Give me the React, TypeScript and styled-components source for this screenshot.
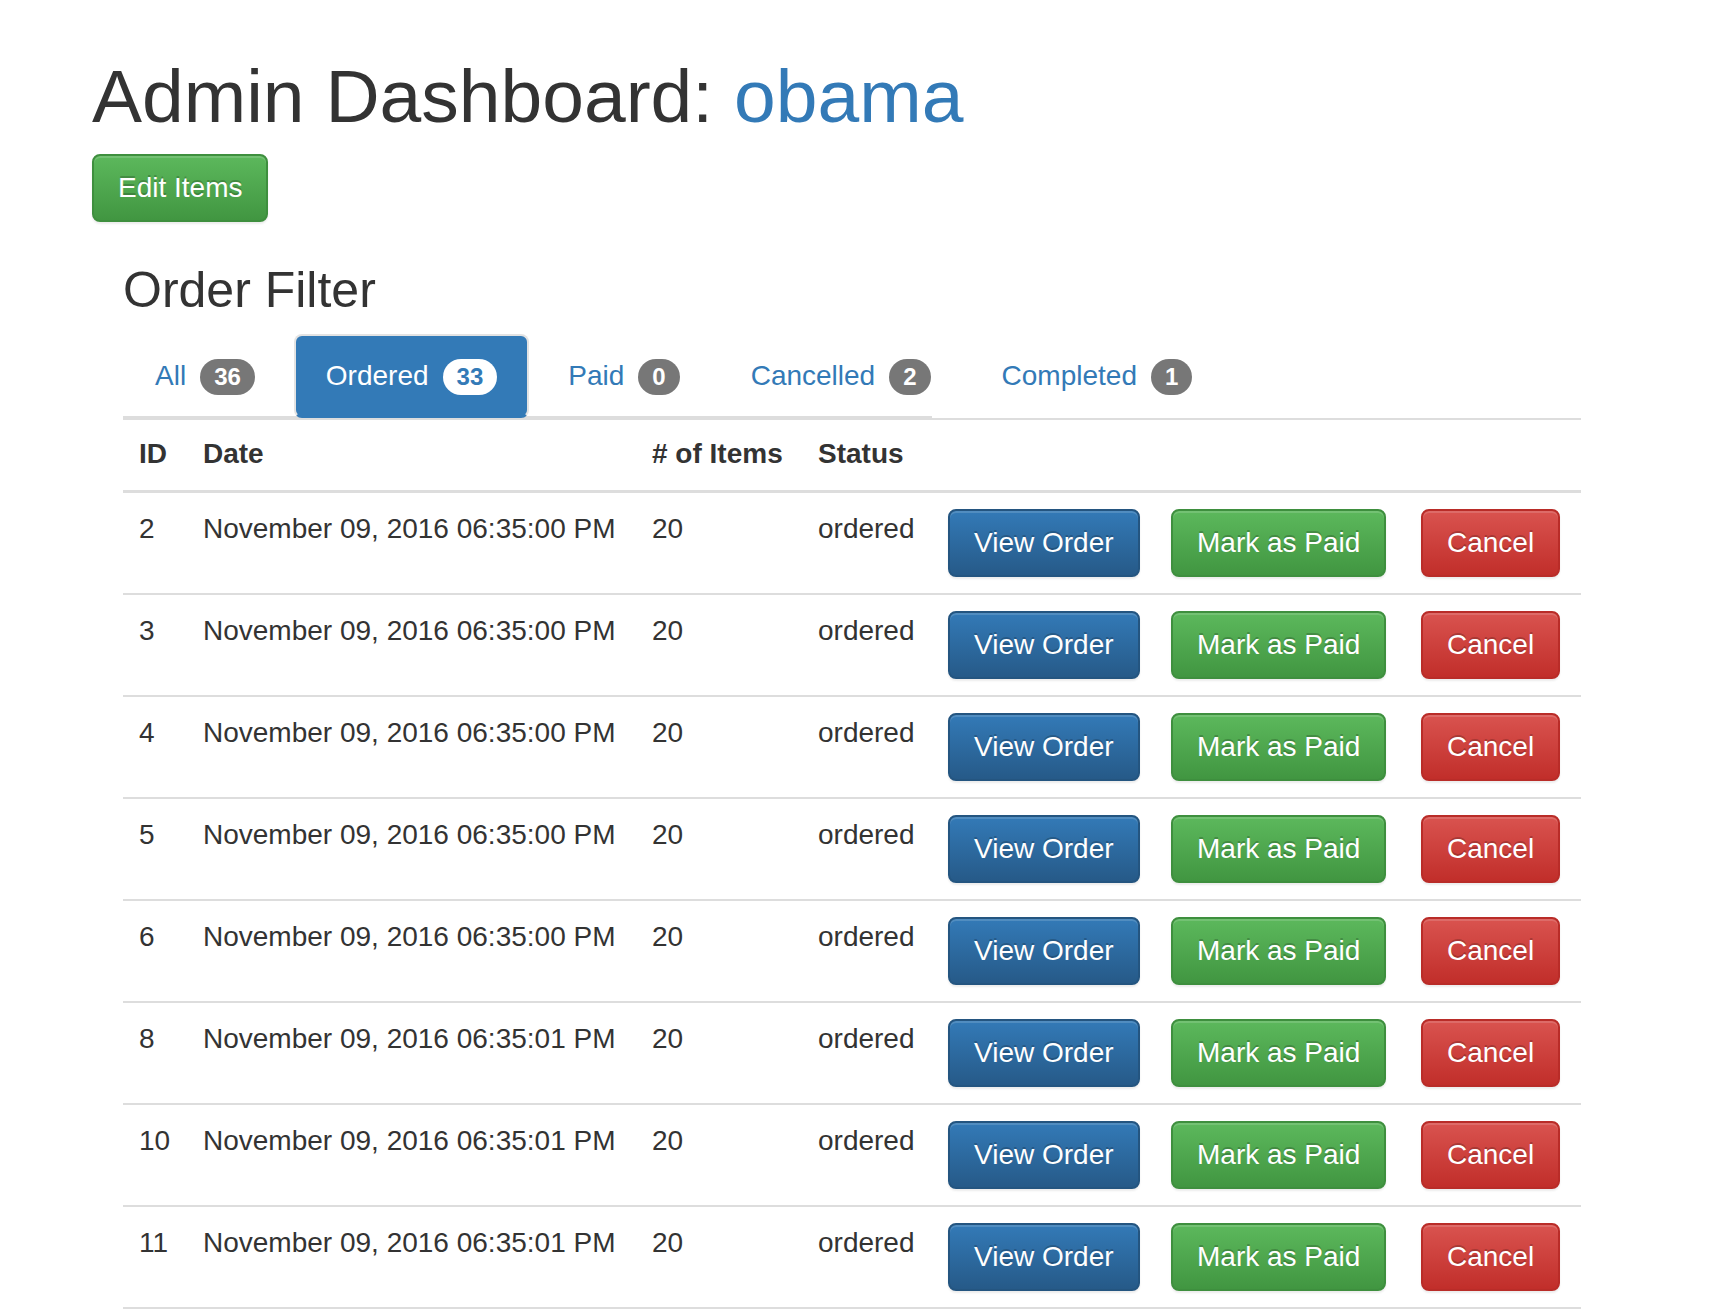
import React from "react";
import styled, { createGlobalStyle, css } from "styled-components";

const GlobalStyle = createGlobalStyle`
  html, body { margin: 0; padding: 0; background: #fff; }
  body {
    font-family: "Liberation Sans", Arial, Helvetica, sans-serif;
    font-size: 28px;
    line-height: 40px;
    color: #333;
  }
  * { box-sizing: border-box; }
`;

const Page = styled.div`
  padding: 16px 0 0 92px;
`;

const Title = styled.h1`
  font-size: 75px;
  font-weight: 400;
  line-height: 1.1;
  margin: 39px 0 16px;
  color: #333;
`;

const UserLink = styled.a`
  color: #337ab7;
  text-decoration: none;
`;

type Variant = "primary" | "success" | "danger";

const variants: Record<Variant, ReturnType<typeof css>> = {
  primary: css`
    background-image: linear-gradient(to bottom, #337ab7 0, #265a88 100%);
    border-color: #245580;
  `,
  success: css`
    background-image: linear-gradient(to bottom, #5cb85c 0, #419641 100%);
    border-color: #3e8f3e;
  `,
  danger: css`
    background-image: linear-gradient(to bottom, #d9534f 0, #c12e2a 100%);
    border-color: #b92c28;
  `,
};

const Button = styled.button<{ $variant: Variant }>`
  display: inline-block;
  font-family: inherit;
  font-size: 28px;
  line-height: 40px;
  padding: 12px 24px;
  border: 2px solid transparent;
  border-radius: 8px;
  color: #fff;
  white-space: nowrap;
  cursor: pointer;
  text-shadow: 0 -2px 0 rgba(0, 0, 0, 0.2);
  box-shadow: inset 0 2px 0 rgba(255, 255, 255, 0.15), 0 2px 2px rgba(0, 0, 0, 0.075);
  ${(p) => variants[p.$variant]}
`;

const Section = styled.div`
  padding-left: 31px;
  width: 1489px;
`;

const SubTitle = styled.h3`
  font-size: 50px;
  font-weight: 400;
  line-height: 55px;
  margin: 41px 0 16px;
  color: #333;
`;

const Tabs = styled.ul`
  display: flex;
  flex-wrap: nowrap;
  list-style: none;
  margin: 0;
  padding: 0;
  width: 809px;
  border-bottom: 2px solid #ddd;
`;

const TabItem = styled.li`
  margin: 0 7px -2px 0;
  flex: none;
`;

const TabLink = styled.a<{ $active?: boolean }>`
  display: flex;
  align-items: center;
  padding: 20px 30px;
  line-height: 40px;
  border: 2px solid transparent;
  border-radius: 8px;
  color: #337ab7;
  text-decoration: none;
  white-space: nowrap;
  ${(p) =>
    p.$active &&
    css`
      background: #337ab7;
      color: #fff;
      border-color: #e3e3e3 #e3e3e3 transparent;
    `}
`;

const Badge = styled.span<{ $active?: boolean }>`
  display: inline-block;
  margin-left: 14px;
  padding: 6px 14px;
  font-size: 24px;
  font-weight: 700;
  line-height: 24px;
  border-radius: 20px;
  background: ${(p) => (p.$active ? "#fff" : "#777")};
  color: ${(p) => (p.$active ? "#337ab7" : "#fff")};
  position: relative;
  top: 1px;
`;

const Table = styled.table`
  width: 1458px;
  table-layout: fixed;
  border-collapse: collapse;
  border-spacing: 0;
`;

const Col = styled.col<{ $w: number }>`
  width: ${(p) => p.$w}px;
`;

const HeadCell = styled.th`
  text-align: left;
  font-weight: 700;
  padding: 14px 16px 16px;
  line-height: 40px;
  vertical-align: bottom;
  border-top: 2px solid #ddd;
  border-bottom: 3px solid #ddd;
  white-space: nowrap;
`;

const Cell = styled.td`
  padding: 16px;
  line-height: 40px;
  vertical-align: top;
  border-bottom: 2px solid #ddd;
  white-space: nowrap;
`;

const tabs = [
  { label: "All", count: 36 },
  { label: "Ordered", count: 33, active: true },
  { label: "Paid", count: 0 },
  { label: "Cancelled", count: 2 },
  { label: "Completed", count: 1 },
];

const orders = [
  { id: 2, date: "November 09, 2016 06:35:00 PM" },
  { id: 3, date: "November 09, 2016 06:35:00 PM" },
  { id: 4, date: "November 09, 2016 06:35:00 PM" },
  { id: 5, date: "November 09, 2016 06:35:00 PM" },
  { id: 6, date: "November 09, 2016 06:35:00 PM" },
  { id: 8, date: "November 09, 2016 06:35:01 PM" },
  { id: 10, date: "November 09, 2016 06:35:01 PM" },
  { id: 11, date: "November 09, 2016 06:35:01 PM" },
];

const columns = [64, 449, 166, 130, 223, 250, 176];

export default function App() {
  return (
    <>
      <GlobalStyle />
      <Page>
        <Title>
          Admin Dashboard: <UserLink href="#">obama</UserLink>
        </Title>
        <Button $variant="success">Edit Items</Button>
        <Section>
          <SubTitle>Order Filter</SubTitle>
          <Tabs>
            {tabs.map((t) => (
              <TabItem key={t.label}>
                <TabLink href="#" $active={t.active}>
                  {t.label}
                  <Badge $active={t.active}>{t.count}</Badge>
                </TabLink>
              </TabItem>
            ))}
          </Tabs>
          <Table>
            <colgroup>
              {columns.map((w, i) => (
                <Col key={i} $w={w} />
              ))}
            </colgroup>
            <thead>
              <tr>
                <HeadCell>ID</HeadCell>
                <HeadCell>Date</HeadCell>
                <HeadCell># of Items</HeadCell>
                <HeadCell>Status</HeadCell>
                <HeadCell />
                <HeadCell />
                <HeadCell />
              </tr>
            </thead>
            <tbody>
              {orders.map((o) => (
                <tr key={o.id}>
                  <Cell>{o.id}</Cell>
                  <Cell>{o.date}</Cell>
                  <Cell>20</Cell>
                  <Cell>ordered</Cell>
                  <Cell>
                    <Button $variant="primary">View Order</Button>
                  </Cell>
                  <Cell>
                    <Button $variant="success">Mark as Paid</Button>
                  </Cell>
                  <Cell>
                    <Button $variant="danger">Cancel</Button>
                  </Cell>
                </tr>
              ))}
            </tbody>
          </Table>
        </Section>
      </Page>
    </>
  );
}
